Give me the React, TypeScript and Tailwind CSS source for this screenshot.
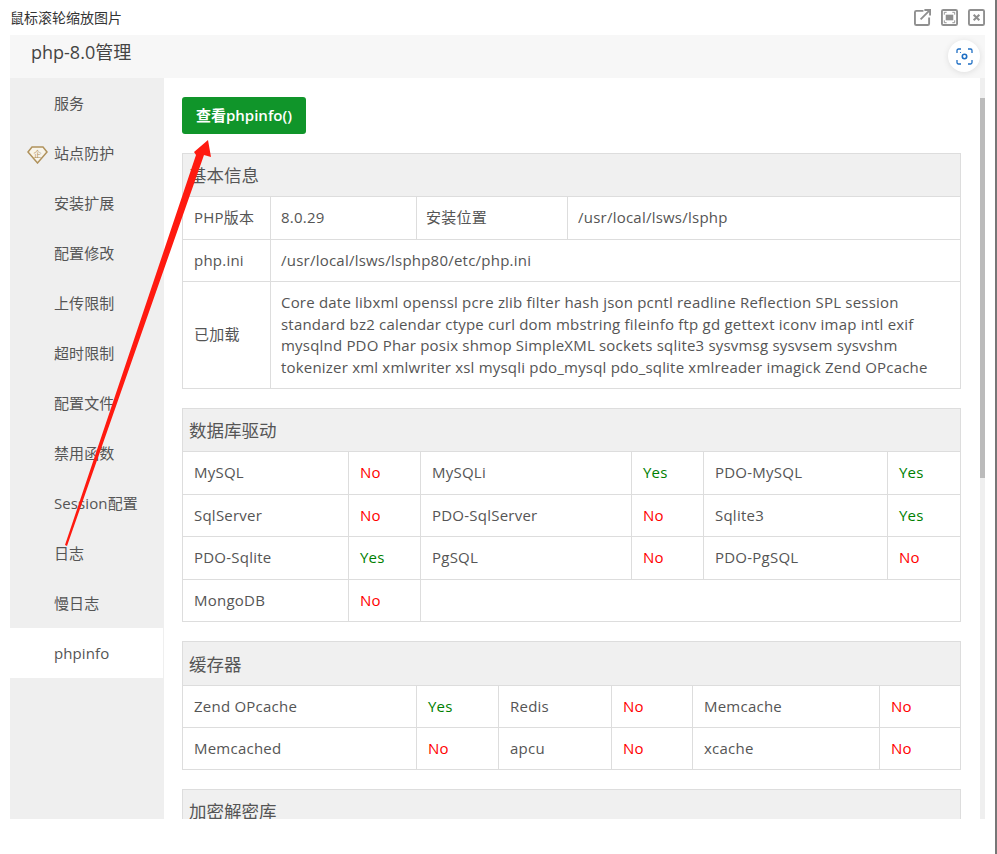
const sans = "font-['Open_Sans','Noto_Sans_CJK_SC',sans-serif]";

const menu = ["服务", "站点防护", "安装扩展", "配置修改", "上传限制", "超时限制", "配置文件", "禁用函数", "Session配置", "日志", "慢日志", "phpinfo"];

function Val({ v }: { v: string }) {
  if (v === "Yes") return <span className="text-[#008000]">Yes</span>;
  if (v === "No") return <span className="text-[#ff0000]">No</span>;
  return <>{v}</>;
}

function Section({ title, widths, rows, heights, headH = "h-[43px] leading-[43px]" }: { title: string; widths: string; rows: string[][]; heights: string; headH?: string }) {
  return (
    <div className="mb-[19px] border border-[#ddd] text-[15px] leading-[20px] tracking-[.23px] text-[#555]">
      <div className={`${headH} border-b border-[#ddd] bg-[#f0f0f0] pl-[6px] text-[17.500px] tracking-normal text-[#555]`}>{title}</div>
      <div className="grid" style={{ gridTemplateColumns: widths, gridTemplateRows: heights }}>
        {rows.flatMap((r, i) =>
          r.map((c, j) => (
            <div
              key={`${i}-${j}`}
              className={`flex items-center border-[#ddd] pb-[2px] pl-[11px] pr-[9px] ${j < r.length - 1 ? "border-r" : ""} ${i < rows.length - 1 ? "border-b" : ""} ${c === "" ? "col-span-4" : ""}`}
            >
              <Val v={c} />
            </div>
          )),
        )}
      </div>
    </div>
  );
}

export default function App() {
  return (
    <div className={`relative h-[854px] w-[997px] overflow-hidden bg-white ${sans}`}>
      <div className="flex h-[35px] items-center justify-between pl-[10px] pr-[12px]">
        <span className="text-[14px] leading-[35px] text-[#333]">鼠标滚轮缩放图片</span>
        <div className="flex items-center gap-[10px] text-[#8f8f8f]">
          <svg width="17" height="17" viewBox="0 0 18 18" fill="none" stroke="currentColor" strokeWidth="2">
            <path d="M10 2H2.500A1.500 1.500 0 0 0 1 3.500v12A1.500 1.500 0 0 0 2.500 17h12a1.500 1.500 0 0 0 1.500-1.500V9" />
            <path d="M7 11 16.500 1.500M11 1h6v6" />
          </svg>
          <svg width="17" height="17" viewBox="0 0 18 18" fill="none" stroke="currentColor" strokeWidth="2">
            <rect x="1" y="1" width="16" height="16" rx="1.500" />
            <rect x="5" y="6" width="8" height="6" fill="currentColor" stroke="none" />
            <path d="M3.500 6V3.500H6M12 3.500h2.500V6M14.500 12v2.500H12M6 14.500H3.500V12" strokeWidth="1" />
          </svg>
          <svg width="17" height="17" viewBox="0 0 18 18" fill="none" stroke="currentColor" strokeWidth="2">
            <rect x="1" y="1" width="16" height="16" rx="1.500" />
            <path d="M6 6l6 6M12 6l-6 6" strokeWidth="2.200" />
          </svg>
        </div>
      </div>

      <div className="ml-[10px] flex h-[784px] w-[975px] flex-col">
        <div className="h-[43px] shrink-0 bg-[#f7f7f7] pl-[21px] text-[18px] leading-[35px] text-[#444]">php-8.0管理</div>
        <div className="flex min-h-0 flex-1">
          <div className="w-[154px] shrink-0 bg-[#efefef]">
            {menu.map((m, i) => (
              <div
                key={m}
                className={`relative h-[50px] pl-[44px] text-[15px] leading-[50px] tracking-[.1px] text-[#555] ${m === "phpinfo" ? "mr-px bg-white" : ""}`}
              >
                {i === 1 && (
                  <svg className="absolute left-[17px] top-[18px]" width="21" height="18" viewBox="0 0 21 18" fill="none">
                    <path d="M5 1h11l4 5-9.500 11L1 6z" stroke="#b0925c" strokeWidth="1.500" fill="#f8f4ea" />
                    <text x="10.500" y="11" textAnchor="middle" fontSize="8" fill="#b0925c" fontFamily="'Noto Sans CJK SC',sans-serif">企</text>
                  </svg>
                )}
                {m}
              </div>
            ))}
          </div>
          <div className="min-w-0 flex-1 overflow-hidden pl-[18px] pr-[19px] pt-[19px]">
            <button className="mb-[19px] block h-[37px] w-[124px] rounded-[3px] bg-[#10952a] text-[15px] font-semibold text-white">查看phpinfo()</button>

            <div className="mb-[19px] border border-[#ddd] text-[15px] leading-[20px] tracking-[.23px] text-[#555]">
              <div className="h-[43px] border-b border-[#ddd] bg-[#f0f0f0] pl-[6px] text-[17.500px] leading-[43px] tracking-normal">基本信息</div>
              <div className="grid grid-cols-[88px_146px_151px_1fr] grid-rows-[43px_42px_106px]">
                <div className="flex items-center border-b border-r border-[#ddd] pb-[2px] pl-[11px]">PHP版本</div>
                <div className="flex items-center border-b border-r border-[#ddd] pb-[2px] pl-[10px]">8.0.29</div>
                <div className="flex items-center border-b border-r border-[#ddd] pb-[2px] pl-[9px]">安装位置</div>
                <div className="flex items-center border-b border-[#ddd] pb-[2px] pl-[10px]">/usr/local/lsws/lsphp</div>
                <div className="flex items-center border-b border-r border-[#ddd] pb-[2px] pl-[11px]">php.ini</div>
                <div className="col-span-3 flex items-center border-b border-[#ddd] pb-[2px] pl-[10px]">/usr/local/lsws/lsphp80/etc/php.ini</div>
                <div className="flex items-center border-r border-[#ddd] pb-[2px] pl-[11px]">已加载</div>
                <div className="col-span-3 flex items-center px-[10px] leading-[21.500px] tracking-[.2px]">
                  <div>Core date libxml openssl pcre zlib filter hash json pcntl readline Reflection SPL session standard bz2 calendar ctype curl dom mbstring fileinfo ftp gd gettext iconv imap intl exif mysqlnd PDO Phar posix shmop SimpleXML sockets sqlite3 sysvmsg sysvsem sysvshm tokenizer xml xmlwriter xsl mysqli pdo_mysql pdo_sqlite xmlreader imagick Zend OPcache</div>
                </div>
              </div>
            </div>

            <Section
              title="数据库驱动"
              widths="166px 72px 211px 72px 184px 1fr"
              heights="43px 42px 43px 41px"
              rows={[
                ["MySQL", "No", "MySQLi", "Yes", "PDO-MySQL", "Yes"],
                ["SqlServer", "No", "PDO-SqlServer", "No", "Sqlite3", "Yes"],
                ["PDO-Sqlite", "Yes", "PgSQL", "No", "PDO-PgSQL", "No"],
                ["MongoDB", "No", ""],
              ]}
            />

            <Section
              title="缓存器"
              widths="234px 82px 113px 81px 187px 1fr"
              heights="42px 41px"
              headH="h-[44px] leading-[44px]"
              rows={[
                ["Zend OPcache", "Yes", "Redis", "No", "Memcache", "No"],
                ["Memcached", "No", "apcu", "No", "xcache", "No"],
              ]}
            />

            <div className="border border-[#ddd] text-[#555]">
              <div className="h-[43px] bg-[#f0f0f0] pl-[6px] text-[17.500px] leading-[43px]">加密解密库</div>
            </div>
          </div>
          <div className="relative w-[5px] shrink-0 bg-[#efefef]">
            <div className="absolute left-0 top-[20px] h-[380px] w-[5px] bg-[#bbbbbb]" />
          </div>
        </div>
      </div>

      <div className="absolute right-0 top-0 h-full w-[2px] bg-[#777777]" />

      <div className="absolute left-[948px] top-[40px] flex h-[32px] w-[32px] items-center justify-center rounded-full bg-white shadow-[0_1px_6px_rgba(0,0,0,0.1)]">
        <svg width="17" height="17" viewBox="0 0 17 17" fill="none" stroke="#1f6fc4" strokeWidth="1.300">
          <path d="M1 5V2.500A1.500 1.500 0 0 1 2.500 1H5M12 1h2.500A1.500 1.500 0 0 1 16 2.500V5M16 12v2.500a1.500 1.500 0 0 1-1.500 1.500H12M5 16H2.500A1.500 1.500 0 0 1 1 14.500V12" />
          <circle cx="8.500" cy="8.500" r="2.200" strokeWidth="1.600" />
          <circle cx="4.500" cy="4.500" r=".6" fill="#1f6fc4" stroke="none" />
        </svg>
      </div>

      <svg className="pointer-events-none absolute left-0 top-0" width="997" height="854" fill="none">
        <path d="M208 140 L211 157 L204 155 L67 546 L65 545 L196 155 L194 152 Z" fill="#ff1a10" />
      </svg>
    </div>
  );
}
